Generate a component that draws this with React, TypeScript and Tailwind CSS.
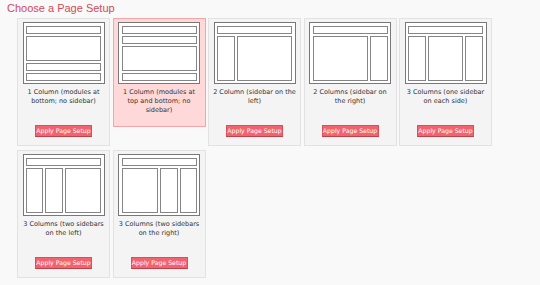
import React from "react";

type Layout = "bottom" | "topbottom" | "left" | "right" | "both" | "twoLeft" | "twoRight";

const box = "border-[1.5px] border-[#858585] bg-white";

function Thumb({ layout }: { layout: Layout }) {
  let body: React.ReactNode;
  if (layout === "bottom") {
    body = (
      <>
        <div className={`${box} h-[8px]`} />
        <div className={`${box} flex-1`} />
        <div className={`${box} h-[8px]`} />
        <div className={`${box} h-[8px]`} />
      </>
    );
  } else if (layout === "topbottom") {
    body = (
      <>
        <div className={`${box} h-[8px]`} />
        <div className={`${box} h-[8px]`} />
        <div className={`${box} flex-1`} />
        <div className={`${box} h-[8px]`} />
      </>
    );
  } else {
    let cols: React.ReactNode;
    if (layout === "left") {
      cols = (
        <>
          <div className={`${box} w-[18px]`} />
          <div className={`${box} flex-1`} />
        </>
      );
    } else if (layout === "right") {
      cols = (
        <>
          <div className={`${box} flex-1`} />
          <div className={`${box} w-[18px]`} />
        </>
      );
    } else if (layout === "both") {
      cols = (
        <>
          <div className={`${box} w-[18px]`} />
          <div className={`${box} flex-1`} />
          <div className={`${box} w-[18px]`} />
        </>
      );
    } else if (layout === "twoLeft") {
      cols = (
        <>
          <div className={`${box} w-[17px]`} />
          <div className={`${box} w-[18px]`} />
          <div className={`${box} flex-1`} />
        </>
      );
    } else {
      cols = (
        <>
          <div className={`${box} flex-1`} />
          <div className={`${box} w-[18px]`} />
          <div className={`${box} w-[17px]`} />
        </>
      );
    }
    body = (
      <>
        <div className={`${box} h-[8px]`} />
        <div className="flex flex-1 gap-[2px]">{cols}</div>
      </>
    );
  }
  return (
    <div className="flex h-[62px] w-[82px] shrink-0 flex-col gap-[2px] border-[1.5px] border-[#787878] bg-white p-[2.5px]">
      {body}
    </div>
  );
}

const items: { layout: Layout; label: string; selected?: boolean }[] = [
  { layout: "bottom", label: "1 Column (modules at bottom; no sidebar)" },
  { layout: "topbottom", label: "1 Column (modules at top and bottom; no sidebar)", selected: true },
  { layout: "left", label: "2 Column (sidebar on the left)" },
  { layout: "right", label: "2 Columns (sidebar on the right)" },
  { layout: "both", label: "3 Columns (one sidebar on each side)" },
  { layout: "twoLeft", label: "3 Columns (two sidebars on the left)" },
  { layout: "twoRight", label: "3 Columns (two sidebars on the right)" },
];

export default function App() {
  return (
    <div
      className="h-[285px] w-[540px] overflow-hidden bg-[#f9f9f9]"
      style={{ fontFamily: '"DejaVu Sans", Verdana, sans-serif' }}
    >
      <h1
        className="pl-[7px] pt-[2px] text-[11px] leading-[13px] text-[#d14b57]"
        style={{ fontFamily: '"Liberation Sans", Arial, sans-serif' }}
      >
        Choose a Page Setup
      </h1>
      <div className="ml-[17px] mt-[3px] flex w-[480px] flex-wrap items-start gap-x-[2.5px] gap-y-[4px]">
        {items.map((it) => (
          <div
            key={it.label}
            className={`flex w-[93px] flex-col items-center border px-[3.5px] pb-[8px] pt-[3px] ${
              it.selected ? "border-[#f3a5a8] bg-[#ffd9d9]" : "border-[#e2e2e2] bg-[#f4f4f4]"
            }`}
          >
            <Thumb layout={it.layout} />
            <p className="mt-[4px] min-h-[30px] w-full text-center text-[6.5px] leading-[9px] text-[#333]">
              {it.label}
            </p>
            {!it.selected && (
              <button className="mt-[7px] flex h-[12px] w-[57px] items-center justify-center whitespace-nowrap border border-[#d9505b] border-b-[#c0404a] bg-[#f2636e] p-0 text-[6.2px] leading-none text-white">
                Apply Page Setup
              </button>
            )}
          </div>
        ))}
      </div>
    </div>
  );
}
